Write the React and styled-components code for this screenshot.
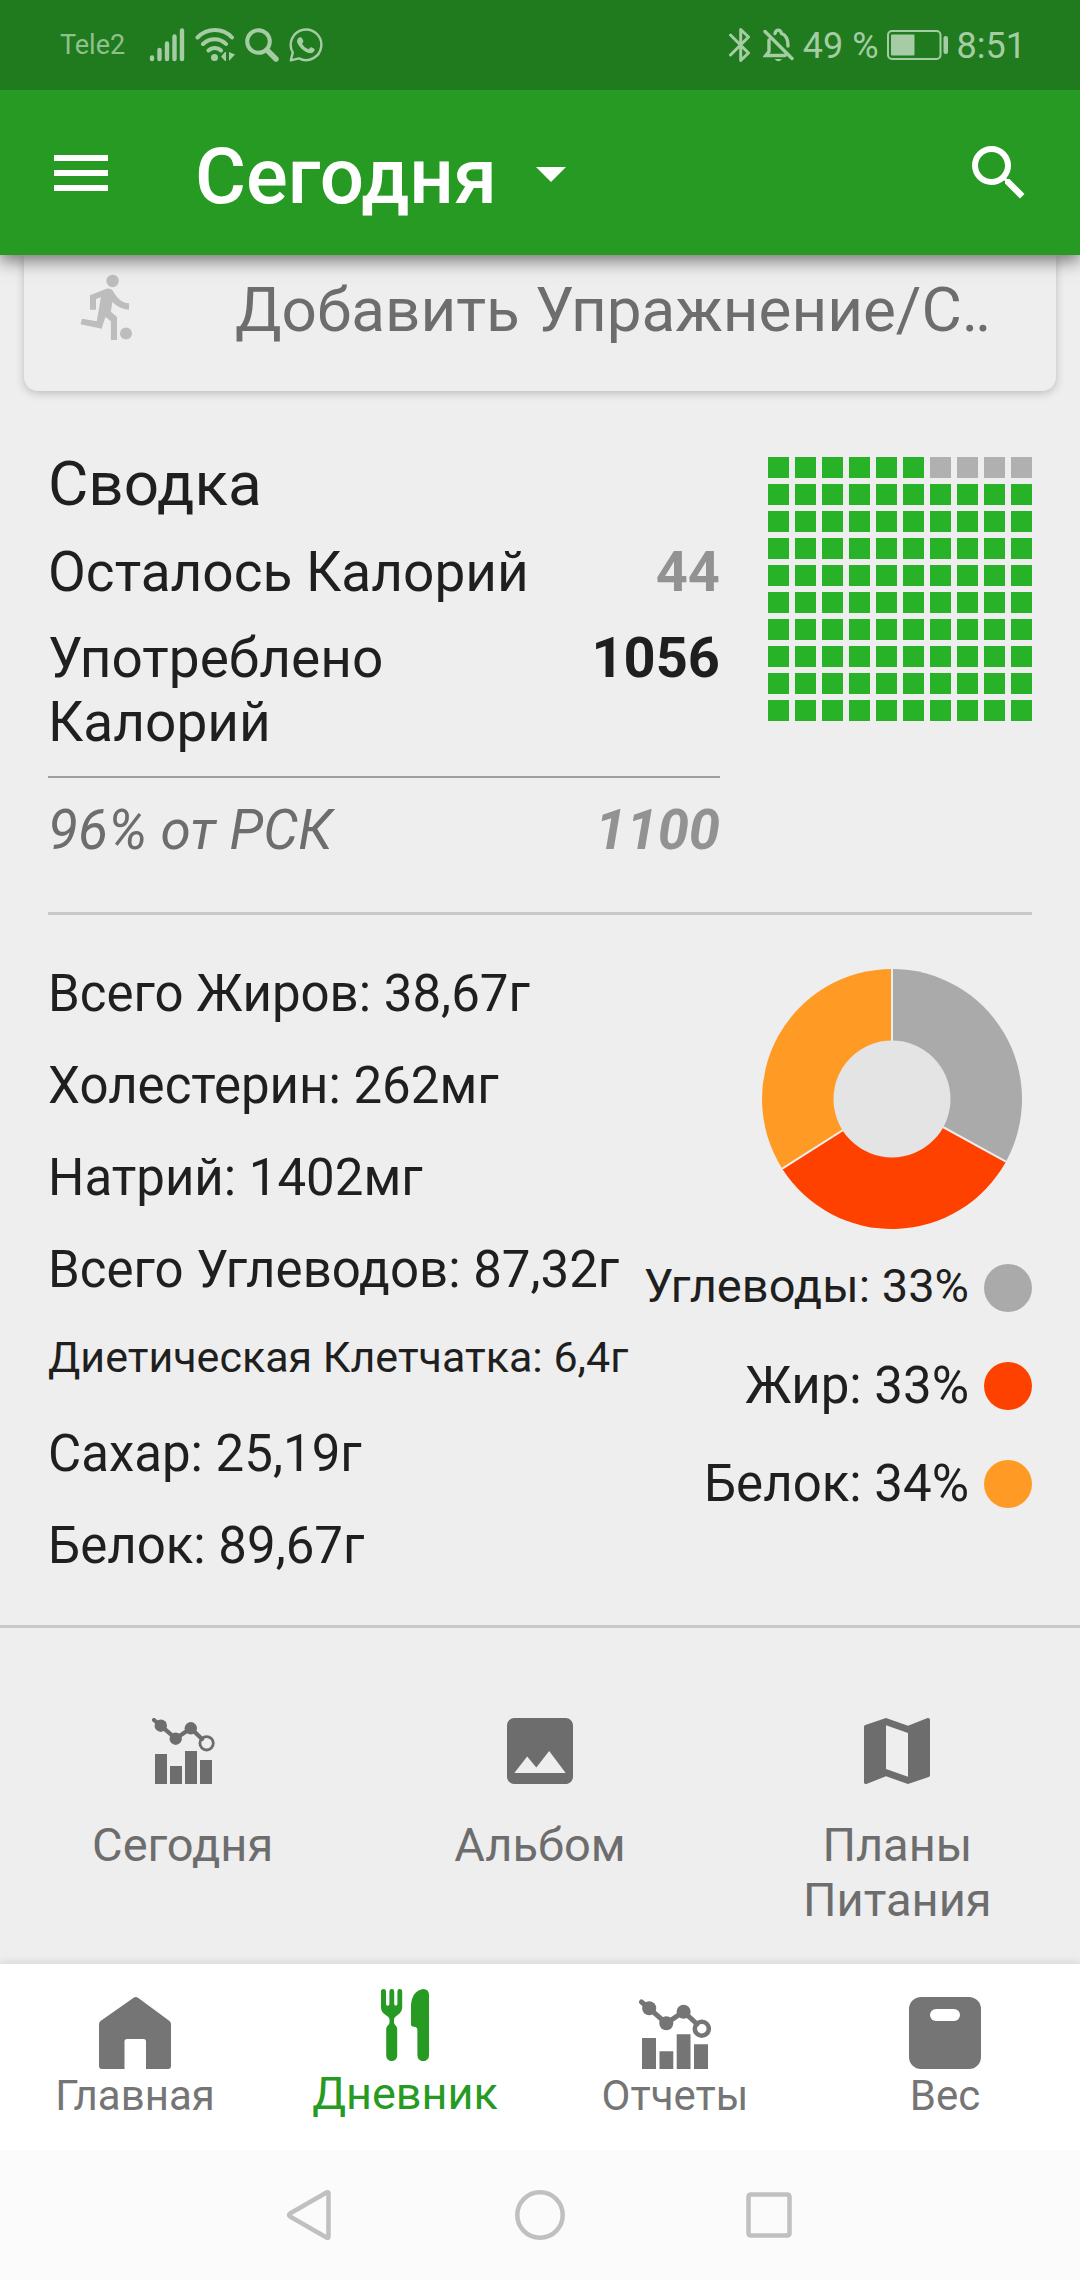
import styled, { createGlobalStyle } from "styled-components";
import {
  MdArrowDropDown,
  MdImage,
  MdMap,
  MdMenu,
  MdSearch,
} from "react-icons/md";

const GlobalStyle = createGlobalStyle`
  * {
    box-sizing: border-box;
  }
  body {
    margin: 0;
    background: #eeeeee;
    color: #1f1f1f;
    font-family: Roboto, "Noto Sans", sans-serif;
  }
  button {
    border: 0;
    padding: 0;
    background: none;
    color: inherit;
    font: inherit;
    cursor: pointer;
  }
  svg {
    display: block;
    flex: none;
  }
`;
const Page = styled.div`
  display: flex;
  flex-direction: column;
  min-height: 100vh;
`;
const StatusBar = styled.div`
  display: flex;
  align-items: center;
  justify-content: space-between;
  z-index: 2;
  height: 90px;
  padding: 0 54px 0 60px;
  background: #1f7b1d;
  color: #a5cca4;
`;
const StatusGroup = styled.div`
  display: flex;
  align-items: center;
  gap: ${(props) => props.$gap}px;
`;
const Carrier = styled.span`
  margin-right: 14px;
  font-size: 27px;
  line-height: 34px;
  color: #8fc08d;
`;
const StatusText = styled.span`
  padding-top: 2px;
  font-size: 36px;
  line-height: 44px;
  white-space: nowrap;
`;
const Header = styled.header`
  display: flex;
  align-items: center;
  z-index: 1;
  height: 165px;
  padding: 0 45px;
  background: #269a23;
  color: #fff;
  box-shadow: 0 6px 16px rgba(0, 0, 0, 0.5);
`;
const DateButton = styled.button`
  display: flex;
  align-items: center;
  gap: 18px;
  margin: 0 auto 0 78px;
`;
const Title = styled.h1`
  margin: 0;
  padding-top: 8px;
  font-size: 78px;
  line-height: 90px;
  font-weight: 500;
`;
const AddCard = styled.button`
  display: flex;
  align-items: flex-start;
  gap: 102px;
  margin: 0 24px;
  padding: 19px 56px 45px;
  border-radius: 0 0 14px 14px;
  box-shadow: 0 2px 10px rgba(0, 0, 0, 0.22);
  color: #6d6d6d;
  text-align: left;
`;
const AddText = styled.span`
  flex: 1;
  min-width: 0;
  overflow: hidden;
  white-space: nowrap;
  font-size: 62px;
  line-height: 72px;
`;
const Summary = styled.section`
  display: flex;
  gap: 48px;
  margin: 57px 48px 0;
  padding-bottom: 50px;
  border-bottom: 3px solid #c9c9c9;
`;
const SummaryMain = styled.div`
  flex: 1;
`;
const SummaryTitle = styled.h2`
  margin: 0 0 20px;
  font-size: 62px;
  line-height: 72px;
  font-weight: 400;
`;
const SummaryRow = styled.div`
  display: flex;
  justify-content: space-between;
  gap: 48px;
  margin-bottom: 22px;
  font-size: 55px;
  line-height: 64px;
`;
const GoalRow = styled(SummaryRow)`
  margin: 0;
  padding-top: 20px;
  border-top: 2px solid #9f9f9f;
  font-style: italic;
  color: #6d6d6d;
`;
const Amount = styled.strong`
  font-size: 56px;
  font-weight: 700;
  color: ${(props) => (props.$muted ? "#929292" : "#1f1f1f")};
`;
const Squares = styled.div`
  display: grid;
  grid-template-columns: repeat(10, 21px);
  grid-auto-rows: 21px;
  gap: 6px;
  align-self: flex-start;
  margin-top: 9px;
`;
const Square = styled.span`
  background: ${(props) => (props.$filled ? "#28b227" : "#b0b0b0")};
`;
const Nutrition = styled.section`
  display: flex;
  justify-content: space-between;
  padding: 49px 48px;
  border-bottom: 3px solid #c9c9c9;
`;
const List = styled.ul`
  display: flex;
  flex-direction: column;
  gap: ${(props) => props.$gap}px;
  margin: 0;
  padding: 0;
  list-style: none;
`;
const ListItem = styled.li`
  height: 60px;
  font-size: ${(props) => props.$size || 51}px;
  white-space: nowrap;
`;
const Macros = styled.div`
  display: flex;
  flex-direction: column;
  align-items: flex-end;
`;
const DonutBox = styled.div`
  padding: 5px 10px 29px;
`;
const LegendItem = styled(ListItem)`
  display: flex;
  align-items: flex-start;
  justify-content: flex-end;
  gap: 15px;
`;
const Dot = styled.span`
  flex: none;
  align-self: center;
  width: 48px;
  height: 48px;
  border-radius: 50%;
  background: ${(props) => props.$color};
`;
const Shortcuts = styled.nav`
  display: grid;
  grid-template-columns: repeat(3, 1fr);
  flex: 1;
  align-items: start;
  padding: 79px 4px 30px;
  color: #6d6d6d;
`;
const Shortcut = styled.a`
  display: flex;
  flex-direction: column;
  align-items: center;
  gap: 22px;
  padding: 0 70px;
  color: inherit;
  font-size: 47px;
  line-height: 55px;
  text-align: center;
  text-decoration: none;
`;
const ShortcutIcon = styled.span`
  display: grid;
  place-items: center;
  height: 88px;
`;
const TabBar = styled.nav`
  display: grid;
  grid-template-columns: repeat(4, 1fr);
  height: 186px;
  background: #fff;
  box-shadow: 0 -2px 8px rgba(0, 0, 0, 0.1);
`;
const Tab = styled.a`
  display: flex;
  flex-direction: column;
  align-items: center;
  gap: ${(props) => (props.$active ? 6 : 2)}px;
  padding-top: ${(props) => (props.$active ? 25 : 33)}px;
  color: ${(props) => (props.$active ? "#269a23" : "#757575")};
  font-size: ${(props) => (props.$active ? 45 : 42)}px;
  text-decoration: none;
`;
const SystemBar = styled.div`
  display: flex;
  align-items: center;
  justify-content: center;
  gap: 180px;
  height: 130px;
  background: #fbfbfb;
  color: #c0c0c0;
`;

const SignalIcon = () => (
  <svg width="36" height="34" viewBox="0 0 36 34" stroke="currentColor" strokeWidth="4.4" strokeLinecap="round">
    <path d="M3 29.500V31M10.500 22V31M18 15.500V31M25.500 8.500V31M33 2.500V31" />
  </svg>
);
const WifiIcon = () => (
  <svg width="40" height="34" viewBox="0 0 40 34" fill="none" stroke="currentColor" strokeWidth="4" strokeLinecap="round">
    <path d="M2.500 9.500C12-.5 28-.5 37 9.500M8 16C14.500 9.500 25 9.500 31 16M13.500 22.500C17 19 22.500 19 26 22.500" />
    <circle cx="19.500" cy="29.500" r="3.500" fill="currentColor" stroke="none" />
    <path d="M31 24V33H30L26 28.500L30 24ZM34 24V33L40 26.500Z" fill="currentColor" stroke="none" />
  </svg>
);
const StatusSearchIcon = () => (
  <svg width="34" height="34" viewBox="0 0 34 34" fill="none" stroke="currentColor" strokeLinecap="round">
    <circle cx="13.500" cy="13.500" r="11.300" strokeWidth="4" />
    <path d="M22 22L31 31" strokeWidth="5.400" />
  </svg>
);
const WhatsappIcon = () => (
  <svg width="34" height="34" viewBox="0 0 34 34" fill="none" stroke="currentColor" strokeWidth="2.400">
    <path d="M1.800 32.300L3.800 24.500A15.300 15.300 0 1 1 10 30.400Z" strokeLinejoin="round" />
    <path
      d="M9 10.500C10 9 12 8.600 13 10L14.300 13C14.600 14 13.500 15 13 15.800C14.500 18.500 16.800 20.300 19.600 21.300L21.600 19.300C22.500 19 24.800 20.500 25.500 21C26 22.500 24.500 25 21.500 25.200C15 25 8 17 8 13C8 12 8.400 11.200 9 10.500Z"
      fill="currentColor"
      stroke="none"
    />
  </svg>
);
const BluetoothIcon = () => (
  <svg width="26" height="36" viewBox="0 0 26 36" fill="none" stroke="currentColor" strokeWidth="3" strokeLinecap="round" strokeLinejoin="round">
    <path d="M1.500 8L19.500 26L11.700 33.500V2.500L19.500 10L1.500 28" />
  </svg>
);
const BellOffIcon = () => (
  <svg width="32" height="34" viewBox="0 0 32 34" fill="none" stroke="currentColor" strokeWidth="3.400" strokeLinecap="round">
    <path d="M2 3.500L29 30.500M22 27.500H2.800L6 23.500V12M12 5.500C13 1 17.500 1 18.500 5.500C23 7 25 11 25 18" />
    <path d="M11.500 31H19Q15.500 35.500 11.500 31Z" fill="currentColor" stroke="none" />
  </svg>
);
const BatteryIcon = () => (
  <svg width="62" height="30" viewBox="0 0 62 30" fill="currentColor">
    <rect x="1" y="1" width="52.500" height="28" rx="4" fill="none" stroke="currentColor" strokeWidth="2" />
    <rect x="4" y="4.500" width="23.500" height="21" rx="1" />
    <rect x="56.500" y="6" width="4.500" height="18" rx="2" />
  </svg>
);
const PlayerIcon = () => (
  <svg width="53" height="66" viewBox="0 0 53 66" fill="#bdbdbd">
    <circle cx="32.600" cy="7" r="6.200" />
    <circle cx="46" cy="59.500" r="6" />
    <path d="M10 21.300L26 14.900Q31 13.300 34 18.700Q40 29 49 29.300V35.700Q39 35 32.300 28L30.900 37.700L37 43V66H30.900V47.300L25.400 43L21.600 54.700L.6 50.300L2 44.700L16.800 47.300L20.900 23.300L16 25V35.700H10Z" />
  </svg>
);
const TrendIcon = () => (
  <svg width="66" height="66" viewBox="0 0 66 66" fill="currentColor">
    <path d="M5 36H17V66H5ZM20 48H32V66H20ZM35 33H47V66H35ZM50 42H62V66H50Z" />
    <path d="M4 2L10.800 7.700L25.700 20.700L40.800 10.300L52 21" fill="none" stroke="currentColor" strokeWidth="4.200" strokeLinecap="round" />
    <circle cx="10.800" cy="7.700" r="6.200" />
    <circle cx="25.700" cy="20.700" r="6.200" />
    <circle cx="40.800" cy="10.300" r="6.200" />
    <circle cx="56.600" cy="25.300" r="6.700" fill="none" stroke="currentColor" strokeWidth="2.800" />
  </svg>
);
const ReportsIcon = () => (
  <svg width="72" height="72" viewBox="0 0 72 72" fill="currentColor">
    <path d="M3 41H17V72H3ZM20.500 54.300H34.300V72H20.500ZM37.700 37.300H51.500V72H37.700ZM55 47.300H69V72H55Z" />
    <path d="M2.500 5L10.200 11.300L27.300 26.300L44.600 14.700L58 27" fill="none" stroke="currentColor" strokeWidth="5" strokeLinecap="round" />
    <circle cx="10.200" cy="11.300" r="7" />
    <circle cx="27.300" cy="26.300" r="7" />
    <circle cx="44.600" cy="14.700" r="7" />
    <circle cx="62.800" cy="31.700" r="7" fill="none" stroke="currentColor" strokeWidth="4.500" />
  </svg>
);
const HomeIcon = () => (
  <svg width="72" height="72" viewBox="0 0 72 72" fill="currentColor">
    <path d="M35 .6Q37 -.5 39 .8L70.500 24Q72 25.300 72 27V69Q72 72 69 72H47V44.500Q47 42 44.500 42H28Q25.500 42 25.500 44.500V72H3Q0 72 0 69V27Q0 25.300 1.500 24Z" />
  </svg>
);
const DiaryIcon = () => (
  <svg width="48" height="72" viewBox="0 0 48 72" fill="currentColor">
    <path d="M0 2.500A2.500 2.500 0 0 1 5 2.500V15A1.700 1.700 0 0 0 8.400 15V2.500A2.400 2.400 0 0 1 13.200 2.500V15A1.600 1.600 0 0 0 16.400 15V2.500A2.400 2.400 0 0 1 21.200 2.500V19Q21 22 18.500 24.500L14.500 27.700Q13 29 13 30.500V33.500Q13 35 14.500 36.300Q16.200 38 16.200 40V66.500A5.500 5.500 0 0 1 5.200 66.500V40Q5.200 38 7 36.300Q8.500 35 8.500 33.500V30.500Q8.500 29 7 27.700L2.700 24.500Q0 22 0 19Z" />
    <path d="M30 16Q31 2 42 0Q48 0 48 6V66.500A5.800 5.800 0 0 1 36.400 66.500V40.500Q36.400 38.500 34.500 38L31.500 37.600Q30 37 30 35.500Z" />
  </svg>
);
const WeightIcon = () => (
  <svg width="72" height="72" viewBox="0 0 72 72">
    <rect width="72" height="72" rx="12" fill="currentColor" />
    <rect x="21" y="12" width="30" height="12" rx="6" fill="#fff" />
  </svg>
);

const MACROS = [
  { label: "Углеводы", percent: 33, color: "#aaaaaa", size: 47 },
  { label: "Жир", percent: 33, color: "#ff4100" },
  { label: "Белок", percent: 34, color: "#ff9a25" },
];
const NUTRIENTS = [
  { text: "Всего Жиров: 38,67г" },
  { text: "Холестерин: 262мг" },
  { text: "Натрий: 1402мг" },
  { text: "Всего Углеводов: 87,32г" },
  { text: "Диетическая Клетчатка: 6,4г", size: 43 },
  { text: "Сахар: 25,19г" },
  { text: "Белок: 89,67г" },
];
const TABS = [
  { label: "Главная", Icon: HomeIcon },
  { label: "Дневник", Icon: DiaryIcon, active: true },
  { label: "Отчеты", Icon: ReportsIcon },
  { label: "Вес", Icon: WeightIcon },
];

function Donut() {
  const point = (percent) => {
    const a = (percent / 100) * Math.PI * 2;
    return `${130 + 130 * Math.sin(a)} ${130 - 130 * Math.cos(a)}`;
  };
  let start = 0;
  const slices = MACROS.map((macro) => {
    const from = start;
    start += macro.percent;
    return { ...macro, from, to: start };
  });
  return (
    <svg width="260" height="260" viewBox="0 0 260 260">
      {slices.map((s) => (
        <path
          key={s.label}
          d={`M130 130L${point(s.from)}A130 130 0 0 1 ${point(s.to)}Z`}
          fill={s.color}
        />
      ))}
      {slices.map((s) => (
        <path key={s.label} d={`M130 130L${point(s.from)}`} stroke="#eeeeee" strokeWidth="2" />
      ))}
      <circle cx="130" cy="130" r="58.500" fill="#e4e4e4" />
    </svg>
  );
}

export default function App() {
  return (
    <Page>
      <GlobalStyle />
      <StatusBar>
        <StatusGroup $gap={10}>
          <Carrier>Tele2</Carrier>
          <SignalIcon />
          <WifiIcon />
          <StatusSearchIcon />
          <WhatsappIcon />
        </StatusGroup>
        <StatusGroup $gap={8}>
          <BluetoothIcon />
          <BellOffIcon />
          <StatusText>49 %</StatusText>
          <BatteryIcon />
          <StatusText>8:51</StatusText>
        </StatusGroup>
      </StatusBar>
      <Header>
        <button aria-label="Меню">
          <MdMenu size={72} />
        </button>
        <DateButton>
          <Title>Сегодня</Title>
          <MdArrowDropDown size={72} />
        </DateButton>
        <button aria-label="Поиск">
          <MdSearch size={72} />
        </button>
      </Header>
      <AddCard>
        <PlayerIcon />
        <AddText>Добавить Упражнение/С‥</AddText>
      </AddCard>
      <Summary>
        <SummaryMain>
          <SummaryTitle>Сводка</SummaryTitle>
          <SummaryRow>
            <span>Осталось Калорий</span>
            <Amount $muted>44</Amount>
          </SummaryRow>
          <SummaryRow>
            <span>Употреблено Калорий</span>
            <Amount>1056</Amount>
          </SummaryRow>
          <GoalRow>
            <span>96% от РСК</span>
            <Amount $muted>1100</Amount>
          </GoalRow>
        </SummaryMain>
        <Squares>
          {Array.from({ length: 100 }, (_, i) => (
            <Square key={i} $filled={i < 6 || i > 9} />
          ))}
        </Squares>
      </Summary>
      <Nutrition>
        <List $gap={32}>
          {NUTRIENTS.map((n) => (
            <ListItem key={n.text} $size={n.size}>
              {n.text}
            </ListItem>
          ))}
        </List>
        <Macros>
          <DonutBox>
            <Donut />
          </DonutBox>
          <List $gap={38}>
            {MACROS.map((m) => (
              <LegendItem key={m.label} $size={m.size}>
                {m.label}: {m.percent}%
                <Dot $color={m.color} />
              </LegendItem>
            ))}
          </List>
        </Macros>
      </Nutrition>
      <Shortcuts>
        <Shortcut href="#today">
          <ShortcutIcon>
            <TrendIcon />
          </ShortcutIcon>
          Сегодня
        </Shortcut>
        <Shortcut href="#album">
          <ShortcutIcon>
            <MdImage size={88} />
          </ShortcutIcon>
          Альбом
        </Shortcut>
        <Shortcut href="#plans">
          <ShortcutIcon>
            <MdMap size={88} />
          </ShortcutIcon>
          Планы Питания
        </Shortcut>
      </Shortcuts>
      <TabBar>
        {TABS.map(({ label, Icon, active }) => (
          <Tab key={label} href="#" $active={active}>
            <Icon />
            {label}
          </Tab>
        ))}
      </TabBar>
      <SystemBar>
        <svg width="50" height="50" viewBox="0 0 50 50" fill="none" stroke="currentColor" strokeWidth="4.500" strokeLinejoin="round">
          <path d="M43.500 3.500Q43.500 1.500 41.500 2.500L5 23.500Q3 25 5 26.500L41.500 47.500Q43.500 48.500 43.500 46.500Z" />
        </svg>
        <svg width="50" height="50" viewBox="0 0 50 50" fill="none" stroke="currentColor" strokeWidth="4.500">
          <circle cx="25" cy="25" r="22.700" />
        </svg>
        <svg width="50" height="50" viewBox="0 0 50 50" fill="none" stroke="currentColor" strokeWidth="4.500">
          <rect x="3.500" y="4.500" width="41" height="41" rx="2" />
        </svg>
      </SystemBar>
    </Page>
  );
}
